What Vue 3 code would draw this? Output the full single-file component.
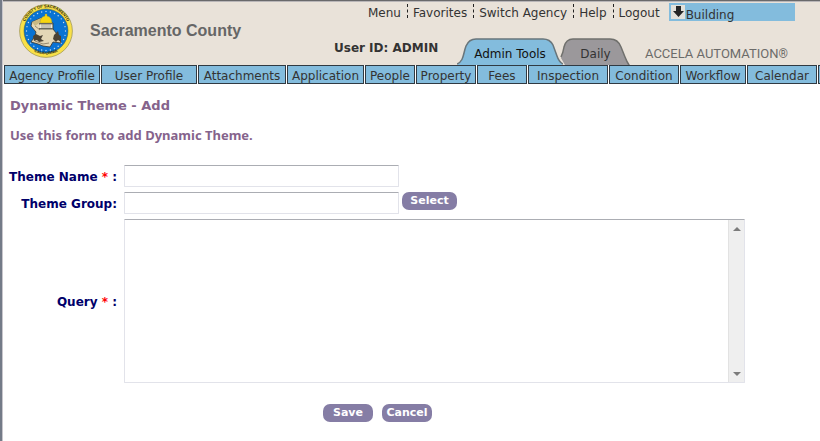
<script setup>
import { ref } from 'vue'

const links = ['Menu', 'Favorites', 'Switch Agency', 'Help', 'Logout']
const sections = [
  { name: 'Agency Profile', width: 96 },
  { name: 'User Profile', width: 96 },
  { name: 'Attachments', width: 88 },
  { name: 'Application', width: 77 },
  { name: 'People', width: 50 },
  { name: 'Property', width: 60 },
  { name: 'Fees', width: 50 },
  { name: 'Inspection', width: 80 },
  { name: 'Condition', width: 70 },
  { name: 'Workflow', width: 66 },
  { name: 'Calendar', width: 70 },
  { name: '', width: 70 },
]
const stars = Array.from({ length: 28 }, (_, i) => {
  const a = (i / 28) * Math.PI * 2
  return { x: 27 + 19.5 * Math.cos(a), y: 27 + 19.5 * Math.sin(a) }
})
const themeName = ref('')
const themeGroup = ref('')
const query = ref('')
</script>

<template>
  <div class="page">
    <header class="top">
      <svg class="seal" viewBox="0 0 54 54" role="img" aria-label="County seal">
        <defs>
          <path id="arcTop" d="M4.500 30 A22.800 22.800 0 1 1 49.500 30" />
          <path id="arcBottom" d="M9 43 A25.600 25.600 0 0 0 45 43" />
        </defs>
        <circle cx="27" cy="27" r="26.4" fill="#f8e048" stroke="#a39a5c" stroke-width=".8" />
        <circle cx="27" cy="27" r="22" fill="#0873d4" stroke="#4a5a35" stroke-width=".5" />
        <circle v-for="(s, i) in stars" :key="i" :cx="s.x" :cy="s.y" r=".7" fill="#c5dcf0" />
        <path d="M13 18L22 14L27 17L34 19L34 25L41 34L42 39L34 38L31 43L24 42L19 40L12 38L16 32L17 28L12 22Z" fill="#e3d7b6" stroke="#39352c" stroke-width=".8" />
        <path d="M13 18l9-4 1 3-7 5z" fill="#c9b982" />
        <path d="M21 19q0-6 5-7v-2h2v2q5 1 5 7z" fill="#f7d511" stroke="#a08d24" stroke-width=".4" />
        <path d="M20 19h14v1.500H20zM20 24h14v1.500H20z" fill="#68675c" />
        <path d="M21 20.500h12V24H21z" fill="#eeeadc" />
        <path d="M23 20v4M25 20v4M27 20v4M29 20v4M31 20v4" stroke="#68675c" stroke-width=".6" />
        <path d="M14 32l3-2 4 2 3-1-2 4 3 2-5 1-2-2-3 1zM35 31l4-4 1 4 2 1v6l-3-2-2 2-3-3z" fill="#4a4234" />
        <path d="M16 22l5 4M16 37l8 3 6-1" fill="none" stroke="#81745a" stroke-width=".8" />
        <text class="seal-text"><textPath href="#arcTop" startOffset="50%" text-anchor="middle">COUNTY OF SACRAMENTO</textPath></text>
        <text class="seal-text"><textPath href="#arcBottom" startOffset="50%" text-anchor="middle">CALIFORNIA</textPath></text>
      </svg>
      <h1 class="county">Sacramento County</h1>
      <div class="tools">
        <div class="menu-row">
          <nav class="links">
            <a v-for="link in links" :key="link" href="#">{{ link }}</a>
          </nav>
          <button class="module" type="button">
            <svg viewBox="0 0 14 14" aria-hidden="true">
              <rect width="14" height="14" fill="#e3e1da" />
              <path d="M5 1h5v5h3L7.500 12 2 6h3z" fill="#252525" />
            </svg>
            <span>Building</span>
          </button>
        </div>
        <div class="tab-row">
          <span class="user">User ID: ADMIN</span>
          <nav class="tabs">
            <a class="tab tab-active" href="#">
              <svg viewBox="0 0 106 28" preserveAspectRatio="none" aria-hidden="true">
                <path d="M0 28C7 24 6 17 9 9Q12 2 19 2H86Q93 2 96 8L100 19Q102 25 106 28Z" fill="#83bcdd" />
                <path d="M0 27C7 24 6 17 9 9Q12 2 19 2H86Q93 2 96 8L100 19Q102 25 106 27" fill="none" stroke="#68757b" stroke-width="1.500" />
              </svg>
              <span>Admin Tools</span>
            </a>
            <a class="tab tab-daily" href="#">
              <svg viewBox="0 0 71 28" preserveAspectRatio="none" aria-hidden="true">
                <path d="M1 21Q3 16 4 10Q6 2 13 2H50Q58 2 61 10L65 20Q67 25 70 28H5Z" fill="#9b989b" />
                <path d="M1 20Q3 16 4 10Q6 2 13 2H50Q58 2 61 10L65 20Q67 25 69 28" fill="none" stroke="#70706d" stroke-width="1.500" />
              </svg>
              <span>Daily</span>
            </a>
          </nav>
          <span class="brand">ACCELA AUTOMATION<span class="mark">®</span></span>
        </div>
      </div>
    </header>

    <nav class="sections">
      <a v-for="(s, i) in sections" :key="i" href="#" :style="{ width: s.width + 'px' }">{{ s.name }}</a>
    </nav>

    <main>
      <h2>Dynamic Theme - Add</h2>
      <p class="hint">Use this form to add Dynamic Theme.</p>
      <form @submit.prevent>
        <div class="fields">
          <label for="name">Theme Name <em>*</em> :</label>
          <div class="control"><input id="name" v-model="themeName" type="text" /></div>
          <label for="group">Theme Group:</label>
          <div class="control">
            <input id="group" v-model="themeGroup" type="text" />
            <button class="pill wide" type="button">Select</button>
          </div>
          <label for="query">Query <em>*</em> :</label>
          <div class="query">
            <textarea id="query" v-model="query"></textarea>
            <div class="scroll" aria-hidden="true">
              <svg viewBox="0 0 8 4"><path d="M4 0l4 4H0z" fill="#7c7c7c" /></svg>
              <svg viewBox="0 0 8 4"><path d="M0 0h8L4 4z" fill="#7c7c7c" /></svg>
            </div>
          </div>
        </div>
        <div class="actions">
          <button class="pill" type="submit">Save</button>
          <button class="pill" type="button">Cancel</button>
        </div>
      </form>
    </main>
  </div>
</template>

<style>
body {
  background: #fff;
}
</style>

<style scoped>
.page {
  box-sizing: border-box;
  min-height: 100vh;
  overflow: hidden;
  border-left: 2px solid #747b88;
  box-shadow: inset 1px 0 #c8c6cc;
  font-family: Verdana, "DejaVu Sans", sans-serif;
  font-size: 12px;
  color: #333;
}
a {
  color: inherit;
  text-decoration: none;
}
button {
  font-family: inherit;
  border: 0;
  padding: 0;
}
.top {
  display: flex;
  height: 65px;
  box-sizing: border-box;
  margin-left: 1px;
  padding-left: 16px;
  border-top: 1px solid #69696b;
  box-shadow: inset 0 1px #b9b6b8;
  background: #e9e2d9;
}
.seal {
  flex: none;
  width: 54px;
  height: 54px;
  margin-top: 3px;
}
.seal-text {
  font: bold 4px "Liberation Sans", sans-serif;
  fill: #2c2a12;
}
.county {
  flex: none;
  width: 244px;
  margin: 20px 0 0 17px;
  font: bold 16px/20px "Liberation Sans", Arial, sans-serif;
  color: #666;
}
.tools {
  flex: 1;
  display: flex;
  flex-direction: column;
  justify-content: space-between;
}
.menu-row {
  display: flex;
  margin: 2px 0 0 34px;
}
.links {
  display: flex;
  height: 14px;
  margin-top: 1px;
  line-height: 19px;
  white-space: nowrap;
}
.links a + a {
  margin-left: 6px;
  padding-left: 5px;
  border-left: 1px dashed #222;
}
.module {
  display: flex;
  width: 126px;
  height: 18px;
  margin-left: 9px;
  padding-left: 2px;
  gap: 1px;
  background: #83bcdd;
  color: #333;
  font-size: 12px;
  line-height: 24px;
}
.module svg {
  width: 14px;
  height: 14px;
  margin-top: 2px;
}
.tab-row {
  display: flex;
  align-items: flex-end;
  white-space: nowrap;
}
.user {
  width: 123px;
  font-size: 12px;
  font-weight: bold;
  line-height: 16px;
  padding-bottom: 9px;
}
.tabs {
  display: flex;
}
.tab {
  position: relative;
  height: 28px;
  text-align: center;
  line-height: 35px;
}
.tab svg {
  position: absolute;
  inset: 0;
  width: 100%;
  height: 100%;
}
.tab span {
  position: relative;
}
.tab-active {
  z-index: 1;
  width: 106px;
  color: #111;
}
.tab-daily {
  width: 71px;
  margin-left: -3px;
}
.brand {
  margin-left: 14px;
  padding-bottom: 1px;
  font: 13px/20px Roboto, sans-serif;
  color: #6c6b69;
}
.mark {
  font-size: 12px;
}
.sections {
  display: flex;
  gap: 1px;
  padding-left: 2px;
}
.sections a {
  flex: none;
  box-sizing: border-box;
  height: 19px;
  border: 1px solid #303a42;
  background: #83bcdd;
  text-align: center;
  line-height: 21px;
  white-space: nowrap;
}
main {
  padding: 14px 0 0 8px;
}
h2,
.hint {
  margin: 0 0 13px;
  font-size: 13px;
  font-weight: bold;
  line-height: 16px;
  color: #85638c;
}
.hint {
  margin-bottom: 22px;
  font-family: Tahoma, "Noto Sans", sans-serif;
}
.fields {
  display: grid;
  grid-template-columns: 107px minmax(0, 621px);
  gap: 5px 7px;
  align-items: center;
  padding-right: 20px;
}
label {
  padding-top: 2px;
  font-weight: bold;
  text-align: right;
  white-space: nowrap;
  color: #00006a;
  justify-self: end;
}
em {
  font-style: normal;
  color: #f00;
}
.control {
  display: flex;
  gap: 3px;
}
input,
.query {
  box-sizing: border-box;
  border: 1px solid #e2e3ea;
  border-top-color: #abadb3;
  border-radius: 1px;
  background: #fff;
}
input {
  width: 275px;
  height: 22px;
  padding: 2px 4px;
  font: inherit;
}
.query {
  display: flex;
  height: 164px;
}
textarea {
  flex: 1;
  padding: 3px;
  border: 0;
  outline: 0;
  resize: none;
  overflow: hidden;
  font: inherit;
}
.scroll {
  display: flex;
  flex-direction: column;
  justify-content: space-between;
  align-items: center;
  box-sizing: border-box;
  width: 16px;
  padding: 7px 0 6px;
  border-left: 1px solid #e2e2e2;
  background: #efefef;
}
.scroll svg {
  width: 8px;
  height: 4px;
}
.pill {
  width: 50px;
  height: 18px;
  border-radius: 7px;
  background: #857da5;
  color: #fff;
  font-size: 11px;
  font-weight: bold;
  line-height: 18px;
}
.wide {
  width: 55px;
}
.actions {
  display: flex;
  justify-content: center;
  gap: 9px;
  max-width: 735px;
  margin-top: 21px;
}
</style>
